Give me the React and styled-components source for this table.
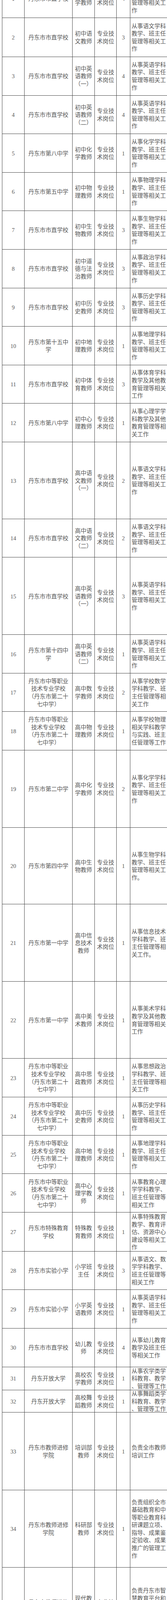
import styled, { createGlobalStyle } from "styled-components";

const GlobalStyle = createGlobalStyle`
  html, body {
    margin: 0;
    padding: 0;
    background: #fff;
  }
  body {
    font-family: "Liberation Serif", "Noto Sans CJK SC", serif;
    color: #555;
  }
`;

const LINE = "#444";
const COLS = "56.6px 123.4px 56.6px 56.7px 34.3px 120px";

const Page = styled.div`
  width: 100%;
  height: 4824px;
  overflow: hidden;
`;

const Sheet = styled.div`
  display: grid;
  grid-template-columns: ${COLS};
  grid-template-rows: ${(p) => p.$rows};
  width: max-content;
  margin: -53.45px 0 0 5.2px;
  border-left: 1px solid ${LINE};
  border-top: 1px solid ${LINE};
`;

const Cell = styled.div`
  box-sizing: border-box;
  display: flex;
  align-items: center;
  justify-content: ${(p) => (p.$left ? "flex-start" : "center")};
  padding: 3px 0 0 ${(p) => (p.$left ? "3.4px" : "0")};
  border-right: 1px solid ${LINE};
  border-bottom: ${(p) => (p.$open ? "none" : `1px solid ${LINE}`)};
  min-width: 0;
  min-height: 0;
`;

const Text = styled.div`
  white-space: pre;
  text-align: ${(p) => (p.$left ? "left" : "center")};
  font-size: ${(p) => p.$size || 14.67}px;
  line-height: 19.6px;
`;

const SZ = "丹东市市直学校";
const ZZ = "丹东市中等职业\n技术专业学校\n（丹东市第二十\n七中学）";
const JX = "丹东市教师进修\n学院";
const ZY = "丹东市中医药学\n校";
const KF = "丹东开放大学";
const GW = "专业技\n术岗位";
const std = (s) => `从事${s}学科\n教学、班主任\n管理等相关工\n作`;

// [序号, 单位, 岗位, 人数, 职责, 行高]
const rows = [
  [1, SZ, "初中数\n学教师", 4, std("数学"), 98.7],
  [2, SZ, "初中语\n文教师", 3, std("语文"), 99.3],
  [3, SZ, "初中英\n语教师\n（一）", 4, std("英语"), 99],
  [4, SZ, "初中英\n语教师\n（二）", 4, std("英语"), 98.7],
  [5, "丹东市第八中学", "初中化\n学教师", 1, std("化学"), 98.3],
  [6, "丹东市第五中学", "初中物\n理教师", 1, std("物理"), 98.3],
  [7, SZ, "初中生\n物教师", 3, std("生物"), 98.7],
  [8, SZ, "初中道\n德与法\n治教师", 3, std("政治"), 99],
  [9, SZ, "初中历\n史教师", 3, std("历史"), 98.7],
  [10, "丹东市第十五中\n学", "初中地\n理教师", 1, std("地理"), 98.3],
  [11, SZ, "初中体\n育教师", 3, "从事体育学科\n教学及其他教\n育管理等相关\n工作", 98.3],
  [12, "丹东市第八中学", "初中心\n理教师", 1, "从事心理学学\n科教学及其他\n教育管理等相\n关工作", 99],
  [13, SZ, "高中语\n文教师\n（一）", 2, std("语文"), 197],
  [14, SZ, "高中语\n文教师\n（二）", 2, std("语文"), 98.7],
  [15, SZ, "高中英\n语教师\n（一）", 3, std("英语"), 197.7],
  [16, "丹东市第十四中\n学", "高中英\n语教师\n（二）", 1, std("英语"), 99],
  [17, ZZ, "高中数\n学教师", 2, "从事学校数学\n学科教学、班\n主任管理等相\n关工作", 97.6],
  [18, ZZ, "高中物\n理教师", 1, "从事学校物理\n相关学科教学\n与实践、班主\n任管理等工作", 99.4],
  [19, "丹东市第二中学", "高中化\n学教师", 2, std("化学"), 197.6],
  [20, "丹东市第四中学", "高中生\n物教师", 1, std("生物") + "。", 196.7],
  [21, "丹东市第一中学", "高中信\n息技术\n教师", 1, "从事信息技术\n学科教学、班\n主任管理等相\n关工作。", 197.7],
  [22, "丹东市第一中学", "高中美\n术教师", 1, "从事美术学科\n教学及其他教\n育管理等相关\n工作", 197],
  [23, ZZ, "高中思\n政教师", 1, "从事思想政治\n学科教学、班\n主任管理等相\n关工作", 99],
  [24, ZZ, "高中历\n史教师", 1, std("历史"), 98],
  [25, ZZ, "高中地\n理教师", 1, std("地理"), 98.3],
  [26, ZZ, "高中心\n理学教\n师", 1, "从事教育心理\n学学科教学、\n班主任管理等\n相关工作", 99],
  [27, "丹东市特殊教育\n学校", "特殊教\n育教师", 1, "从事特殊教育\n教学、教育评\n估、资源中心\n建设等相关工\n作", 99.3],
  [28, "丹东市实验小学", "小学班\n主任", 3, "从事语文、数\n学学科教学、\n班主任管理等\n相关工作", 98.4],
  [29, "丹东市实验小学", "小学英\n语教师", 1, std("英语"), 98.6],
  [30, SZ, "幼儿教\n师", 4, "从事幼儿教育\n教学及班主任\n等相关工作", 99],
  [31, KF, "高校农\n学教师", 1, "从事农学类学\n科教育、教学\n、管理等工作", 59],
  [32, KF, "高校舞\n蹈教师", 1, "从事舞蹈类学\n科教育、教学\n、管理等工作", 57.7],
  [33, JX, "培训部\n教师", 1, "负责全市教师\n培训工作", 198.7],
  [34, JX, "科研部\n教师", 1, "负责组织全市\n基础教育和中\n等职业教育科\n研课题立项、\n指导、成果鉴\n定验收、成果\n推广的管理工\n作", 197.6],
  [35, JX, "现代教\n育技术\n部教师", 1, "负责丹东市智\n慧教育平台和\n教育系统人工\n智能应用及推\n广工作", 197],
  [36, ZY, "中职语\n文教师", 1, "从事中职学校\n语文学科教学\n、班主任管理\n等相关工作", 197.4],
  [37, ZY, "中职心\n理学教\n师", 1, "从事中职学校\n教育心理学学\n科教学、班主\n任管理等相关\n工作", 97.6],
  [38, ZY, "中职康\n复教师", 1, "从事中职学校\n康复学科教学\n与实践，班主\n任管理等相关\n工作", 98.7],
  [39, ZY, "中职医\n学检验\n教师", 1, "从事中职学校\n检验学相关学\n科教学与实\n践，班主任管\n理等工作", 99],
  [40, ZY, "中职药\n学教师", 1, "从事中职学校\n药学等相关学\n科教学与实\n践，班主任管\n理等工作", 99],
];

const trackList = [...rows.map((r) => `${r[5]}px`), "22.7px"].join(" ");

const App = () => (
  <>
    <GlobalStyle />
    <Page>
      <Sheet $rows={trackList}>
        {rows.map(([no, school, post, count, desc]) => [
          <Cell key={`${no}a`}>
            <Text>{no}</Text>
          </Cell>,
          <Cell key={`${no}b`}>
            <Text>{school}</Text>
          </Cell>,
          <Cell key={`${no}c`}>
            <Text>{post}</Text>
          </Cell>,
          <Cell key={`${no}d`}>
            <Text>{GW}</Text>
          </Cell>,
          <Cell key={`${no}e`}>
            <Text>{count}</Text>
          </Cell>,
          <Cell key={`${no}f`} $left>
            <Text $left>{desc}</Text>
          </Cell>,
        ])}
        <Cell $open />
        <Cell $open>
          <Text $size={8}>合计</Text>
        </Cell>
        <Cell $open />
        <Cell $open />
        <Cell $open>
          <Text $size={18}>70</Text>
        </Cell>
        <Cell $open $left />
      </Sheet>
    </Page>
  </>
);

export default App;
